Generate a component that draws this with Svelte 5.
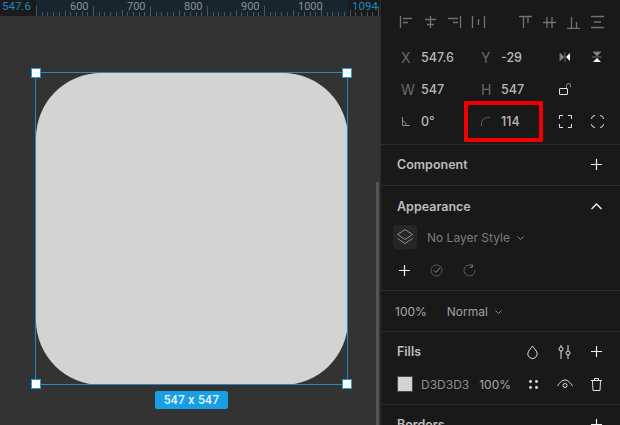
<script>
  const tickCount = 66
  const ticks = Array.from({ length: tickCount }, (_, i) => i)
  const labels = [
    { x: 70, text: '600' },
    { x: 127, text: '700' },
    { x: 184, text: '800' },
    { x: 241, text: '900' },
    { x: 298, text: '1000' }
  ]
  const handles = ['tl', 'tr', 'bl', 'br']
</script>

<div class="app">
  <div class="canvas">
    <div class="ruler">
      <div class="ruler-active"></div>
      <svg class="ruler-ticks" width="376" height="16">
        {#each ticks as i}
          <line x1={8.5 + Math.round(i * 5.7)} x2={8.5 + Math.round(i * 5.7)}
            y1={i % 10 === 0 ? 6 : i % 5 === 0 ? 10 : 12} y2="16" />
        {/each}
      </svg>
      {#each labels as l}
        <span class="ruler-label" style="left:{l.x}px">{l.text}</span>
      {/each}
      <span class="ruler-mark start">547.6</span>
      <span class="ruler-mark end">1094</span>
    </div>

    <div class="shape"></div>
    <div class="selection">
      {#each handles as h}
        <span class="handle {h}"></span>
      {/each}
    </div>
    <div class="size-tag">547 x 547</div>
    <div class="scrollbar"></div>
  </div>

  <aside class="panel">
    <section class="transform">
      <div class="align-row">
        <div class="align-group">
          <svg width="15" height="14" viewBox="0 0 15 14"><path d="M1.500 1v12M4 3.500h9M4 7.500h5" /></svg>
          <svg width="15" height="14" viewBox="0 0 15 14"><path d="M7.500 1v12M2 4.500h11M4 9.500h7" /></svg>
          <svg width="15" height="14" viewBox="0 0 15 14"><path d="M13.500 1v12M1 3.500h10M6 7.500h5" /></svg>
          <svg width="15" height="14" viewBox="0 0 15 14"><path d="M1.500 1v12M13.500 1v12M7.500 4v6" /></svg>
        </div>
        <div class="align-group right">
          <svg width="15" height="14" viewBox="0 0 15 14"><path d="M1 1.500h13M5.500 2v11M10 2v6" /></svg>
          <svg width="15" height="14" viewBox="0 0 15 14"><path d="M1 7.500h13M5 2v11M10 2v11" /></svg>
          <svg width="15" height="14" viewBox="0 0 15 14"><path d="M1 13.500h13M5.500 2v11M10.500 7v6" /></svg>
          <svg width="15" height="14" viewBox="0 0 15 14"><path d="M1 1.500h13M1 12.500h13M4 7h7" /></svg>
        </div>
      </div>

      <div class="fields">
        <span class="key">X</span><span class="val">547.6</span>
        <span class="key">Y</span><span class="val">-29</span>
        <span class="tool">
          <svg width="12" height="12" viewBox="0 0 12 12"><path class="dim" d="M1 2v8l4-4z" /><path class="lit" d="M11 2v8L7 6z" /><path class="dim" d="M6 1v10" /></svg>
        </span>
        <span class="tool">
          <svg width="12" height="12" viewBox="0 0 12 12"><path class="dim" d="M2 1h8L6 5z" /><path class="lit" d="M2 11h8L6 7z" /><path class="dim" d="M1 6h10" /></svg>
        </span>

        <span class="key">W</span><span class="val">547</span>
        <span class="key">H</span><span class="val">547</span>
        <span class="tool">
          <svg width="14" height="14" viewBox="0 0 14 14"><rect class="line" x=".5" y="6.500" width="8" height="6" rx=".5" /><path class="line soft" d="M7.500 6V3.500a2 2 0 0 1 4 0V5" /></svg>
        </span>
        <span></span>

        <span class="key">
          <svg width="9" height="9" viewBox="0 0 9 9"><path class="line soft" d="M1.500 0v8.500H9M1.500 4a4 4 0 0 1 3.500 4.500" /></svg>
        </span>
        <span class="val">0°</span>
        <span class="key">
          <svg width="9" height="9" viewBox="0 0 9 9"><path class="line dim-line" d="M.5 9V6.500A6 6 0 0 1 6.500.5H9" /></svg>
        </span>
        <span class="val">114</span>
        <span class="tool">
          <svg width="13" height="13" viewBox="0 0 13 13"><path class="line" d="M.5 4V.5H4M9 .5h3.500V4M12.500 9v3.500H9M4 12.500H.5V9" /></svg>
        </span>
        <span class="tool">
          <svg width="13" height="13" viewBox="0 0 13 13"><path class="line" d="M.5 4A3.500 3.500 0 0 1 4 .5M9 .5A3.500 3.500 0 0 1 12.500 4M12.500 9A3.500 3.500 0 0 1 9 12.500M4 12.500A3.500 3.500 0 0 1 .5 9" /></svg>
        </span>
      </div>
      <div class="highlight"></div>
    </section>

    <section class="component">
      <h3>Component</h3>
      <svg class="plus" width="11" height="11" viewBox="0 0 11 11"><path d="M5.500 0v11M0 5.500h11" /></svg>
    </section>

    <section class="appearance">
      <div class="head">
        <h3>Appearance</h3>
        <svg width="11" height="7" viewBox="0 0 11 7"><path class="line thick" d="M.5 6l5-5 5 5" /></svg>
      </div>
      <div class="style-row">
        <span class="style-icon">
          <svg width="18" height="18" viewBox="0 0 18 18"><path class="line soft" d="M9 1.500l7.500 5L9 11.500l-7.500-5zM1.500 10.500L9 15.500l7.500-5" /></svg>
        </span>
        <span class="style-name">No Layer Style</span>
        <svg class="caret" width="7" height="4" viewBox="0 0 7 4"><path class="line soft" d="M.5.5l3 3 3-3" /></svg>
      </div>
      <div class="style-actions">
        <svg class="plus" width="11" height="11" viewBox="0 0 11 11"><path d="M5.500 0v11M0 5.500h11" /></svg>
        <svg width="13" height="13" viewBox="0 0 13 13"><circle class="line dim-line" cx="6.500" cy="6.500" r="5.500" /><path class="line soft" d="M4 6.500l2 2 4-5" /></svg>
        <svg width="13" height="13" viewBox="0 0 13 13"><path class="line dim-line" d="M9.500 1.800A5.500 5.500 0 1 0 12 6.500" /><path class="line soft" d="M9 .5l.5 2.500-2.500.5" /></svg>
      </div>
    </section>

    <section class="blend">
      <span class="pct">100%</span>
      <span class="blend-mode">Normal</span>
      <svg class="caret" width="7" height="4" viewBox="0 0 7 4"><path class="line soft" d="M.5.5l3 3 3-3" /></svg>
    </section>

    <section class="fills">
      <div class="head">
        <h3>Fills</h3>
        <div class="head-tools">
          <svg width="11" height="14" viewBox="0 0 11 14"><path class="line" d="M5.500 1C4 3.500.8 6 .8 8.800a4.700 4.700 0 0 0 9.400 0C10.200 6 7 3.500 5.500 1z" /></svg>
          <svg width="13" height="14" viewBox="0 0 13 14"><path class="line" d="M3 0v2M3 6v8M10 0v6M10 10v4" /><circle class="line" cx="3" cy="4" r="2" /><circle class="line" cx="10" cy="8" r="2" /></svg>
          <svg class="plus" width="11" height="11" viewBox="0 0 11 11"><path d="M5.500 0v11M0 5.500h11" /></svg>
        </div>
      </div>
      <div class="fill-row">
        <span class="swatch"></span>
        <span class="hex">D3D3D3</span>
        <span class="pct fill-pct">100%</span>
        <div class="fill-tools">
          <svg width="9" height="9" viewBox="0 0 9 9"><circle class="solid" cx="1.500" cy="1.500" r="1.400" /><circle class="solid" cx="7.500" cy="1.500" r="1.400" /><circle class="solid" cx="1.500" cy="7.500" r="1.400" /><circle class="solid" cx="7.500" cy="7.500" r="1.400" /></svg>
          <svg width="16" height="10" viewBox="0 0 16 10"><path class="line" d="M.5 7C3 3 5.500 1 8 1s5 2 7.500 6" /><circle class="line" cx="8" cy="6.500" r="2" /></svg>
          <svg width="11" height="13" viewBox="0 0 11 13"><path class="line" d="M0 2.500h11M3.500 2.500V.5h4v2M1.500 2.500l.5 10h7l.5-10" /></svg>
        </div>
      </div>
    </section>

    <section class="borders">
      <h3>Borders</h3>
      <svg class="plus" width="11" height="11" viewBox="0 0 11 11"><path d="M5.500 0v11M0 5.500h11" /></svg>
    </section>
  </aside>
</div>

<style>
  :global(body) {
    margin: 0;
    background: #191919;
    font-family: Inter, "Liberation Sans", sans-serif;
    overflow: hidden;
  }

  .app {
    display: flex;
    width: 620px;
    height: 425px;
    overflow: hidden;
  }

  /* canvas */
  .canvas {
    position: relative;
    width: 380px;
    flex-shrink: 0;
    background: #333333;
    border-right: 1px solid #2a2a2a;
    overflow: hidden;
  }
  .ruler {
    position: relative;
    height: 16px;
    background: #1b1b1b;
    overflow: hidden;
  }
  .ruler-active {
    position: absolute;
    left: 36px;
    top: 0;
    width: 312px;
    height: 16px;
    background: #17252f;
  }
  .ruler-ticks {
    position: absolute;
    left: 28px;
    top: 0;
  }
  .ruler-ticks line { stroke: #4c565c; stroke-width: 1; }
  .ruler-label {
    position: absolute;
    top: 0;
    font-family: Roboto, sans-serif;
    font-size: 11px;
    line-height: 13px;
    color: #8a8f93;
  }
  .ruler-mark {
    position: absolute;
    top: 0;
    font-family: Roboto, sans-serif;
    font-size: 11.5px;
    line-height: 13px;
    color: #1c86c4;
  }
  .ruler-mark.start { left: 2px; }
  .ruler-mark.end { left: 352px; }

  .shape {
    position: absolute;
    left: 36px;
    top: 73px;
    width: 312px;
    height: 312px;
    border-radius: 65px;
    background: #d3d3d3;
  }
  .selection {
    position: absolute;
    left: 35px;
    top: 72px;
    width: 311px;
    height: 311px;
    border: 1px solid #2b86bd;
  }
  .handle {
    position: absolute;
    width: 8px;
    height: 8px;
    background: #fff;
    border: 1px solid #1f9bdd;
  }
  .handle.tl { left: -5px; top: -5px; }
  .handle.tr { right: -5px; top: -5px; }
  .handle.bl { left: -5px; bottom: -5px; }
  .handle.br { right: -5px; bottom: -5px; }
  .size-tag {
    position: absolute;
    left: 155px;
    top: 391px;
    width: 73px;
    height: 18px;
    border-radius: 2px;
    background: #189fe6;
    color: #e6f5fd;
    font-family: Roboto, sans-serif;
    font-size: 12px;
    font-weight: 500;
    line-height: 18px;
    letter-spacing: 0.3px;
    text-align: center;
  }
  .scrollbar {
    position: absolute;
    right: 1px;
    top: 182px;
    bottom: 0;
    width: 3px;
    background: #555555;
  }

  /* panel */
  .panel {
    flex: 1;
    min-width: 0;
    background: #191919;
    color: #c4c4c4;
    font-size: 12px;
  }
  .panel section {
    position: relative;
    box-sizing: border-box;
    border-bottom: 1px solid #2e2e2e;
  }
  h3 {
    margin: 0;
    font-size: 12.5px;
    font-weight: 600;
    color: #bdbdbd;
  }
  svg { display: block; flex-shrink: 0; }
  .line { fill: none; stroke: #e2e2e2; stroke-width: 1; }
  .line.soft { stroke: #8c8c8c; }
  .line.dim-line { stroke: #5e5e5e; }
  .line.thick { stroke: #f0f0f0; stroke-width: 1.4; }
  .solid { fill: #e6e6e6; }
  .lit { fill: #ffffff; }
  .dim { fill: #8a8a8a; stroke: #6a6a6a; stroke-width: 1; }
  .plus path { fill: none; stroke: #f2f2f2; stroke-width: 1.2; }

  .transform { height: 145px; padding: 15px 16px 0 18px; }
  .align-row { display: flex; justify-content: space-between; }
  .align-group { display: flex; gap: 9px; }
  .align-group.right { margin-right: -1px; }
  .align-group path { fill: none; stroke: #717171; stroke-width: 1.3; }
  .fields {
    display: grid;
    grid-template-columns: 20px 60px 20px 58px 32px 1fr;
    grid-auto-rows: 32px;
    align-items: center;
    margin-top: 12px;
    margin-left: 2px;
    font-weight: 500;
  }
  .key {
    display: flex;
    align-items: center;
    color: #6a6a6a;
    font-size: 14px;
    font-weight: 400;
  }
  .val { color: #b8b8b8; font-size: 12.5px; font-weight: 500; }
  .tool { display: flex; align-items: center; }
  .highlight {
    position: absolute;
    left: 83px;
    top: 101px;
    width: 79px;
    height: 41px;
    box-sizing: border-box;
    border: 4px solid #f00000;
    border-radius: 1px;
  }

  .component {
    height: 41px;
    display: flex;
    align-items: center;
    justify-content: space-between;
    padding: 0 18px 1px 16px;
  }

  .appearance { height: 105px; padding: 0 18px 0 16px; }
  .head {
    display: flex;
    align-items: center;
    justify-content: space-between;
    height: 41px;
  }
  .style-row { display: flex; align-items: center; margin: -2px 0 0 -4px; }
  .style-icon {
    display: flex;
    align-items: center;
    justify-content: center;
    width: 24px;
    height: 24px;
    border-radius: 4px;
    background: #262626;
  }
  .style-name { margin-left: 10px; color: #7c7c7c; }
  .caret { margin-left: 7px; margin-top: 2px; }
  .style-actions { display: flex; align-items: center; gap: 20px; margin: 15px 0 0 2px; }

  .blend {
    height: 41px;
    display: flex;
    align-items: center;
    padding: 0 0 0 14px;
  }
  .pct { color: #a8a8a8; }
  .blend-mode { margin-left: 20px; color: #a0a0a0; }

  .fills { height: 73px; padding: 0 18px 0 16px; }
  .fills .head { height: 39px; }
  .head-tools { display: flex; align-items: center; gap: 20px; }
  .fill-row { display: flex; align-items: center; margin-top: 5px; }
  .swatch {
    width: 14px;
    height: 14px;
    background: #d3d3d3;
    border: 1px solid #4a4a4a;
  }
  .hex { margin-left: 8px; color: #8e8e8e; }
  .fill-pct { margin-left: 10px; }
  .fill-tools { display: flex; align-items: center; gap: 18.5px; margin-left: auto; }

  .borders {
    display: flex;
    align-items: center;
    justify-content: space-between;
    padding: 12px 18px 0 16px;
    border-bottom: none !important;
  }
</style>
